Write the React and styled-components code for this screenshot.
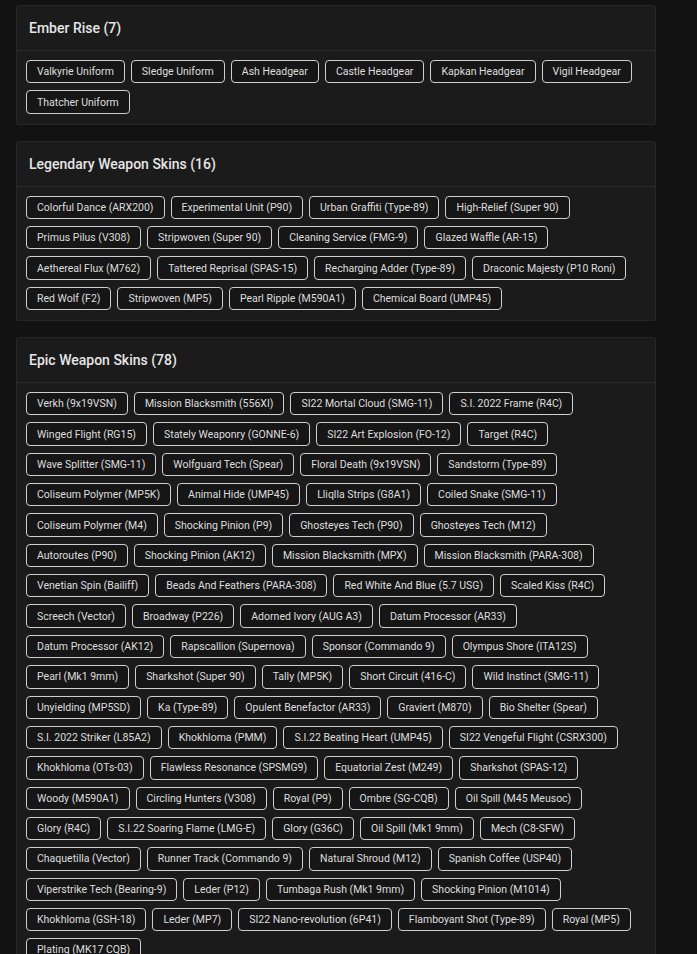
import React from 'react'
import styled, { createGlobalStyle } from 'styled-components'

const GlobalStyle = createGlobalStyle`
    html, body {
        margin: 0;
        padding: 0;
        background-color: #121212;
    }
    body {
        font-family: Roboto, "Liberation Sans", sans-serif;
        color: #e2e2e2;
    }
`

const Page = styled.div`
    display: flex;
    flex-direction: column;
    gap: 16px;
    width: 640px;
    padding: 5px 0 0 16px;
`

const Card = styled.section`
    display: flex;
    flex-direction: column;
    background-color: #1b1b1b;
    border: 1px solid #272727;
    border-radius: 2px;
`

const Header = styled.div`
    display: flex;
    align-items: center;
    height: 44px;
    padding: 0 12px;
    border-bottom: 1px solid #2b2b2b;
`

const Title = styled.h2`
    margin: 0;
    font-size: 14px;
    font-weight: 500;
    color: #e6e6e6;
`

const Chips = styled.div`
    display: flex;
    flex-wrap: wrap;
    gap: 7px 6px;
    padding: 9px 9px 10px;
`

const Chip = styled.span`
    display: flex;
    align-items: center;
    height: 23.35px;
    box-sizing: border-box;
    padding: 0 10px;
    border: 1px solid #cfcfcf;
    border-radius: 4px;
    background-color: #161616;
    font-size: 10.5px;
    color: #dedede;
    white-space: nowrap;
`

const sections = [
    {
        title: 'Ember Rise',
        items: [
            'Valkyrie Uniform', 'Sledge Uniform', 'Ash Headgear', 'Castle Headgear',
            'Kapkan Headgear', 'Vigil Headgear', 'Thatcher Uniform',
        ],
    },
    {
        title: 'Legendary Weapon Skins',
        items: [
            'Colorful Dance (ARX200)', 'Experimental Unit (P90)', 'Urban Graffiti (Type-89)', 'High-Relief (Super 90)',
            'Primus Pilus (V308)', 'Stripwoven (Super 90)', 'Cleaning Service (FMG-9)', 'Glazed Waffle (AR-15)',
            'Aethereal Flux (M762)', 'Tattered Reprisal (SPAS-15)', 'Recharging Adder (Type-89)', 'Draconic Majesty (P10 Roni)',
            'Red Wolf (F2)', 'Stripwoven (MP5)', 'Pearl Ripple (M590A1)', 'Chemical Board (UMP45)',
        ],
    },
    {
        title: 'Epic Weapon Skins',
        items: [
            'Verkh (9x19VSN)', 'Mission Blacksmith (556XI)', 'SI22 Mortal Cloud (SMG-11)', 'S.I. 2022 Frame (R4C)',
            'Winged Flight (RG15)', 'Stately Weaponry (GONNE-6)', 'SI22 Art Explosion (FO-12)', 'Target (R4C)',
            'Wave Splitter (SMG-11)', 'Wolfguard Tech (Spear)', 'Floral Death (9x19VSN)', 'Sandstorm (Type-89)',
            'Coliseum Polymer (MP5K)', 'Animal Hide (UMP45)', 'Lliqlla Strips (G8A1)', 'Coiled Snake (SMG-11)',
            'Coliseum Polymer (M4)', 'Shocking Pinion (P9)', 'Ghosteyes Tech (P90)', 'Ghosteyes Tech (M12)',
            'Autoroutes (P90)', 'Shocking Pinion (AK12)', 'Mission Blacksmith (MPX)', 'Mission Blacksmith (PARA-308)',
            'Venetian Spin (Bailiff)', 'Beads And Feathers (PARA-308)', 'Red White And Blue (5.7 USG)', 'Scaled Kiss (R4C)',
            'Screech (Vector)', 'Broadway (P226)', 'Adorned Ivory (AUG A3)', 'Datum Processor (AR33)',
            'Datum Processor (AK12)', 'Rapscallion (Supernova)', 'Sponsor (Commando 9)', 'Olympus Shore (ITA12S)',
            'Pearl (Mk1 9mm)', 'Sharkshot (Super 90)', 'Tally (MP5K)', 'Short Circuit (416-C)', 'Wild Instinct (SMG-11)',
            'Unyielding (MP5SD)', 'Ka (Type-89)', 'Opulent Benefactor (AR33)', 'Graviert (M870)', 'Bio Shelter (Spear)',
            'S.I. 2022 Striker (L85A2)', 'Khokhloma (PMM)', 'S.I.22 Beating Heart (UMP45)', 'SI22 Vengeful Flight (CSRX300)',
            'Khokhloma (OTs-03)', 'Flawless Resonance (SPSMG9)', 'Equatorial Zest (M249)', 'Sharkshot (SPAS-12)',
            'Woody (M590A1)', 'Circling Hunters (V308)', 'Royal (P9)', 'Ombre (SG-CQB)', 'Oil Spill (M45 Meusoc)',
            'Glory (R4C)', 'S.I.22 Soaring Flame (LMG-E)', 'Glory (G36C)', 'Oil Spill (Mk1 9mm)', 'Mech (C8-SFW)',
            'Chaquetilla (Vector)', 'Runner Track (Commando 9)', 'Natural Shroud (M12)', 'Spanish Coffee (USP40)',
            'Viperstrike Tech (Bearing-9)', 'Leder (P12)', 'Tumbaga Rush (Mk1 9mm)', 'Shocking Pinion (M1014)',
            'Khokhloma (GSH-18)', 'Leder (MP7)', 'SI22 Nano-revolution (6P41)', 'Flamboyant Shot (Type-89)', 'Royal (MP5)',
            'Plating (MK17 CQB)',
        ],
    },
]

const App = () => {
    return <>
        <GlobalStyle />
        <Page>
            {sections.map(section => (
                <Card key={section.title}>
                    <Header>
                        <Title>{section.title} ({section.items.length})</Title>
                    </Header>
                    <Chips>
                        {section.items.map((item, i) => (
                            <Chip key={i}>{item}</Chip>
                        ))}
                    </Chips>
                </Card>
            ))}
        </Page>
    </>
}

export default App
